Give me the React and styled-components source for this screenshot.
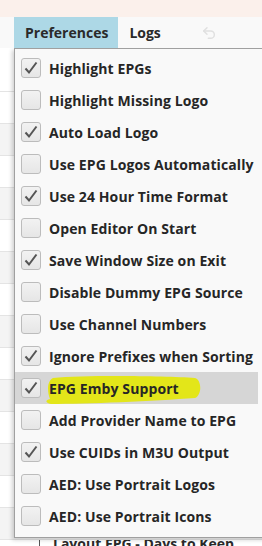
import React from "react";
import styled, { createGlobalStyle } from "styled-components";
import { Undo2 } from "lucide-react";

const OPTIONS = [
  { label: "Highlight EPGs", checked: true },
  { label: "Highlight Missing Logo", checked: false },
  { label: "Auto Load Logo", checked: true },
  { label: "Use EPG Logos Automatically", checked: false },
  { label: "Use 24 Hour Time Format", checked: true },
  { label: "Open Editor On Start", checked: false },
  { label: "Save Window Size on Exit", checked: true },
  { label: "Disable Dummy EPG Source", checked: false },
  { label: "Use Channel Numbers", checked: false },
  { label: "Ignore Prefixes when Sorting", checked: true },
  { label: "EPG Emby Support", checked: true, hover: true, marked: true },
  { label: "Add Provider Name to EPG", checked: false },
  { label: "Use CUIDs in M3U Output", checked: true },
  { label: "AED: Use Portrait Logos", checked: false },
  { label: "AED: Use Portrait Icons", checked: false },
];

const GlobalStyle = createGlobalStyle`
  html, body {
    margin: 0;
    padding: 0;
    width: 262px;
    height: 546px;
    overflow: hidden;
    background: #ffffff;
  }
  body {
    font-family: "Open Sans", "Liberation Sans", sans-serif;
  }
`;

const Page = styled.div`
  position: relative;
  width: 262px;
  height: 546px;
  overflow: hidden;
  display: flex;
  flex-direction: column;
`;

const TitleStrip = styled.div`
  flex-shrink: 0;
  height: 17px;
  background: #fbf0eb;
`;

const MenuBar = styled.div`
  flex-shrink: 0;
  height: 31px;
  display: flex;
  align-items: stretch;
  background: #f9f9f9;
  padding-left: 14px;
`;

const MenuTab = styled.div`
  display: flex;
  align-items: center;
  padding: 0 ${(p) => (p.$active ? "10px" : "12px")} 0 11px;
  background: ${(p) => (p.$active ? "#add8e6" : "transparent")};
  font-size: 14px;
  font-weight: 700;
  color: #2a2a2a;
`;

const UndoSlot = styled.div`
  display: flex;
  align-items: center;
  padding-left: 28px;
  color: #e0e0e0;
`;

const Content = styled.div`
  flex: 1;
  min-height: 0;
  position: relative;
  overflow: hidden;
  background: #ffffff;
`;

const Stripes = styled.div`
  display: flex;
  flex-direction: column;
  padding-top: 43px;
`;

const Stripe = styled.div`
  height: 31px;
  border-top: 1px solid #e4e4e4;
  background: ${(p) => (p.$odd ? "#f4f4f4" : "#ffffff")};
`;

const BottomLine = styled.div`
  position: absolute;
  left: 39px;
  right: 0;
  bottom: 0;
  height: 6px;
  border-left: 1px solid #555;
  background: #fff;
  overflow: hidden;
`;

const BottomText = styled.div`
  margin: -6px 0 0 13px;
  font-size: 14px;
  font-weight: 700;
  color: #2a2a2a;
  white-space: nowrap;
`;

const Dropdown = styled.div`
  position: absolute;
  top: 0;
  left: 14px;
  width: 260px;
  box-sizing: border-box;
  padding: 3px 0 5px;
  background: #f9f9f9;
  border: 1px solid #a0a0a0;
  box-shadow: -2px 2px 4px rgba(0, 0, 0, 0.18);
  display: flex;
  flex-direction: column;
`;

const Row = styled.div`
  position: relative;
  height: 32px;
  margin-right: 15px;
  display: flex;
  align-items: center;
  gap: 8px;
  padding-left: 6px;
  background: ${(p) => (p.$hover ? "#d6d6d6" : "transparent")};
`;

const Box = styled.div`
  width: 20px;
  height: 20px;
  box-sizing: border-box;
  border: 1px solid #bcbcbc;
  border-radius: 3px;
  background: linear-gradient(#f2f2f2, #e6e6e6);
  display: flex;
  align-items: center;
  justify-content: center;
  flex-shrink: 0;
  position: relative;
  z-index: 1;
`;

const Label = styled.span`
  position: relative;
  z-index: 1;
  font-size: 14px;
  font-weight: 700;
  color: #262626;
  white-space: nowrap;
  letter-spacing: 0.1px;
`;

const Marker = styled.svg`
  position: absolute;
  left: 30px;
  top: 1px;
  width: 156px;
  height: 32px;
`;

const Check = () => (
  <svg width="16" height="16" viewBox="0 0 16 16">
    <path d="M2.5 8.5 L6 12.5 L13.5 2.5" fill="none" stroke="#555" strokeWidth="2" />
  </svg>
);

export default function App() {
  return (
    <Page>
      <GlobalStyle />
      <TitleStrip />
      <MenuBar>
        <MenuTab $active>Preferences</MenuTab>
        <MenuTab>Logs</MenuTab>
        <UndoSlot>
          <Undo2 size={16} strokeWidth={2.2} />
        </UndoSlot>
      </MenuBar>
      <Content>
        <Stripes>
          {Array.from({ length: 15 }).map((_, i) => (
            <Stripe key={i} $odd={i % 2 === 1} />
          ))}
        </Stripes>
        <BottomLine>
          <BottomText>Layout EPG - Days to Keep</BottomText>
        </BottomLine>
        <Dropdown>
          {OPTIONS.map((o) => (
            <Row key={o.label} $hover={o.hover}>
              {o.marked && (
                <Marker viewBox="0 0 156 32">
                  <path
                    d="M8 5 C40 2 120 3 150 5 C157 7 157 22 150 25 C110 28 40 31 6 31 C0 30 0 27 5 26 C2 18 2 8 8 5 Z"
                    fill="#e3e619"
                  />
                </Marker>
              )}
              <Box>{o.checked && <Check />}</Box>
              <Label>{o.label}</Label>
            </Row>
          ))}
        </Dropdown>
      </Content>
    </Page>
  );
}
